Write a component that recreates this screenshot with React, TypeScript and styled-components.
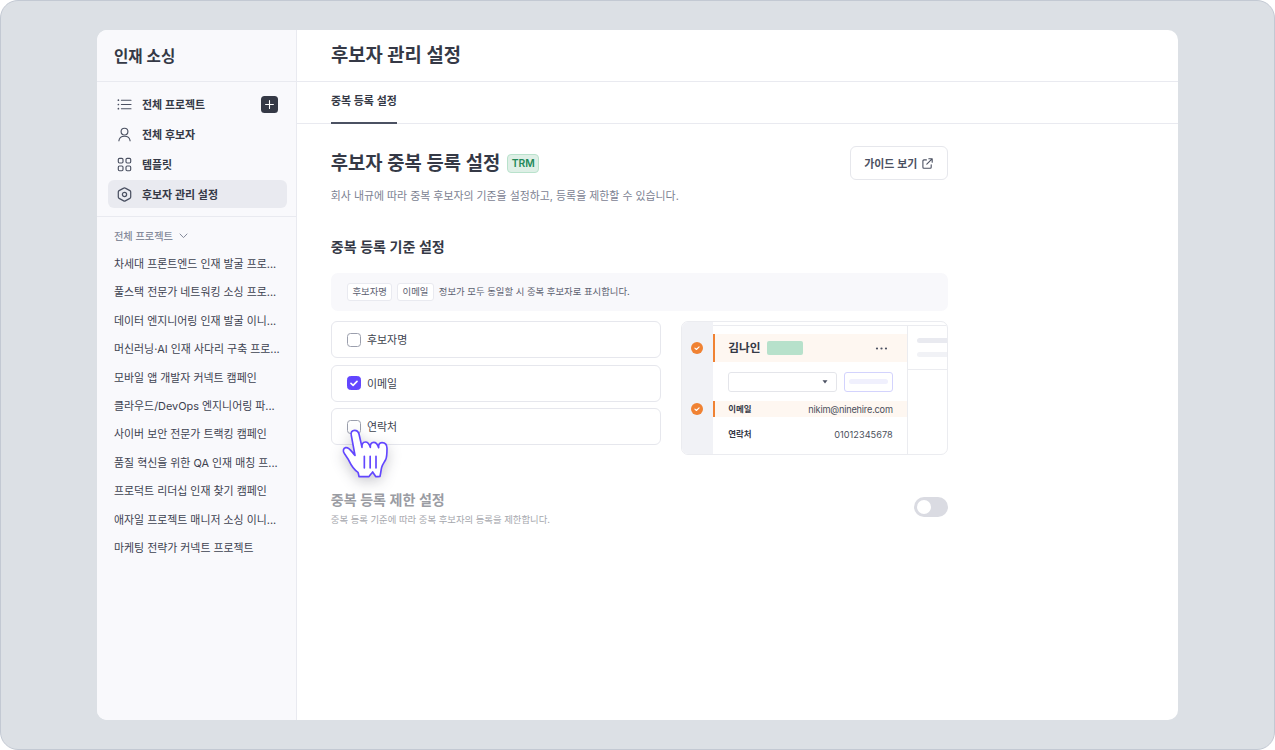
import { useState } from 'react'
import styled, { createGlobalStyle } from 'styled-components'

const GlobalStyle = createGlobalStyle`
    * { box-sizing: border-box; }
    body {
        margin: 0;
        background: #fff;
        color: #353946;
        font-family: Inter, "Noto Sans CJK KR", sans-serif;
        font-size: 10.95px;
        line-height: 16px;
    }
    p, h1, h2, h3, ul { margin: 0; padding: 0; }
    button { font-family: inherit; }
`
const Stage = styled.div`
    width: 1275px;
    height: 750px;
    padding: 29px 96px;
    border: 1px solid #c3c9d3;
    border-radius: 18px;
    background: #dce0e5;
`
const Window = styled.div`
    display: flex;
    width: 1081px;
    height: 690px;
    border-radius: 10px;
    overflow: hidden;
    background: #fff;
`
const Sidebar = styled.aside`
    width: 200.4px;
    flex: none;
    background: #f9f9fc;
    border-right: 1px solid #e9eaf0;
`
const SidebarTitle = styled.h2`
    height: 52px;
    padding: 0 17px;
    border-bottom: 1px solid #e9eaf0;
    font-size: 15.6px;
    line-height: 54px;
    font-weight: 600;
`
const Nav = styled.nav`
    display: flex;
    flex-direction: column;
    gap: 2px;
    height: 135px;
    padding: 8px 9px 0 10.5px;
    border-bottom: 1px solid #e9eaf0;
`
const NavItem = styled.div<{ $active?: boolean }>`
    display: flex;
    align-items: center;
    gap: 10px;
    height: 28px;
    padding: 0 9.5px;
    border-radius: 6px;
    font-weight: 600;
    line-height: 18px;
    background: ${({ $active }) => ($active ? '#e9eaf0' : 'transparent')};
    & > svg {
        flex: none;
        color: #4b5162;
    }
`
const NavLabel = styled.span`
    padding-top: 1px;
`
const AddButton = styled.button`
    display: flex;
    align-items: center;
    justify-content: center;
    width: 17px;
    height: 17px;
    margin-left: auto;
    padding: 0;
    border: none;
    border-radius: 3.5px;
    color: #fff;
    background: #353946;
`
const GroupLabel = styled.div`
    display: flex;
    align-items: center;
    gap: 6px;
    height: 16px;
    margin: 11px 0 0 17px;
    font-size: 10.2px;
    font-weight: 500;
    color: #858b9b;
`
const ProjectList = styled.ul`
    padding: 5.8px 0 0 17px;
    list-style: none;
    & > li {
        height: 28.45px;
        font-size: 10.92px;
        line-height: 28.6px;
        white-space: nowrap;
        color: #3d4250;
    }
`
const Main = styled.main`
    flex: 1;
    min-width: 0;
`
const PageHeader = styled.header`
    height: 52px;
    padding-left: 33.5px;
    border-bottom: 1px solid #e9eaf0;
`
const PageTitle = styled.h1`
    font-size: 18.75px;
    line-height: 52px;
    font-weight: 600;
`
const Tabs = styled.div`
    display: flex;
    height: 42px;
    padding-left: 33.5px;
    border-bottom: 1px solid #e9eaf0;
`
const Tab = styled.div`
    height: 42px;
    line-height: 39px;
    font-weight: 600;
    border-bottom: 2px solid #4b5162;
`
const Content = styled.div`
    width: 650.4px;
    padding: 22px 0 0 33.4px;
`
const TitleRow = styled.div`
    display: flex;
    align-items: center;
    height: 34px;
`
const Title = styled.h2`
    font-size: 18.75px;
    line-height: 34px;
    padding-top: 1px;
    font-weight: 600;
`
const Badge = styled.span`
    height: 19px;
    margin-left: 7px;
    padding: 0 3.5px;
    border: 1px solid #b9e2cc;
    border-radius: 4px;
    font-size: 10.3px;
    line-height: 17px;
    font-weight: 600;
    color: #23895a;
    background: #deefe6;
`
const GuideButton = styled.button`
    display: flex;
    align-items: center;
    justify-content: center;
    gap: 5px;
    width: 98px;
    height: 34px;
    margin-left: auto;
    padding: 0;
    border: 1px solid #e6e7ec;
    border-radius: 6px;
    font-size: 10.95px;
    font-weight: 600;
    color: #4b5162;
    background: #fff;
`
const Description = styled.p`
    margin-top: 8px;
    font-size: 10.92px;
    line-height: 17px;
    color: #7c8292;
`
const SectionTitle = styled.h3<{ $muted?: boolean }>`
    font-size: 14.05px;
    line-height: 20px;
    font-weight: 600;
    color: ${({ $muted }) => ($muted ? '#9a9ca3' : '#353946')};
`
const Criteria = styled.section`
    margin-top: 32px;
`
const Notice = styled.div`
    display: flex;
    align-items: center;
    height: 38px;
    margin-top: 16px;
    padding-left: 16.4px;
    border-radius: 7px;
    font-size: 9.4px;
    color: #5b6070;
    background: #f8f8fb;
`
const Tag = styled.span`
    height: 18px;
    margin-right: 5px;
    padding: 0 4.3px;
    border: 1px solid #e9eaf0;
    border-radius: 3px;
    line-height: 16px;
    background: #fff;
`
const Columns = styled.div`
    display: flex;
    justify-content: space-between;
    margin-top: 10px;
`
const OptionList = styled.div`
    display: flex;
    flex-direction: column;
    gap: 6.7px;
    width: 330px;
`
const Option = styled.div`
    position: relative;
    display: flex;
    align-items: center;
    gap: 6px;
    height: 37px;
    padding-left: 15.2px;
    border: 1px solid #e6e7ed;
    border-radius: 6px;
    color: #40444f;
`
const OptionLabel = styled.span`
    padding-top: 1px;
    line-height: 16px;
`
const Box = styled.span<{ $checked: boolean }>`
    display: flex;
    align-items: center;
    justify-content: center;
    width: 14px;
    height: 14px;
    border: 1px solid ${({ $checked }) => ($checked ? '#6246ff' : '#9b9fad')};
    border-radius: 3.5px;
    background: ${({ $checked }) => ($checked ? '#6246ff' : '#fff')};
`
const Pointer = styled.svg`
    position: absolute;
    left: -2px;
    top: 6px;
    width: 70px;
    height: 75px;
    overflow: visible;
    filter: drop-shadow(0 4px 7px rgba(30, 30, 50, 0.24));
`
const Preview = styled.div`
    display: flex;
    width: 267px;
    height: 134px;
    border: 1px solid #ebecf0;
    border-radius: 7px;
    overflow: hidden;
`
const Gutter = styled.div`
    display: flex;
    flex-direction: column;
    align-items: center;
    gap: 49px;
    width: 31px;
    padding: 20px 1px 0 0;
    background: #f1f2f6;
`
const Profile = styled.div`
    width: 195px;
    margin-top: 3px;
    border-top: 1px solid #ebecf0;
    border-right: 1px solid #ebecf0;
`
const ProfileHead = styled.div`
    display: flex;
    align-items: center;
    height: 28px;
    margin-top: 8px;
    padding: 0 19px 0 13.5px;
    border-left: 2px solid #f08233;
    font-size: 11.7px;
    font-weight: 600;
    background: #fef7f1;
    & > svg { margin-left: auto; }
`
const GreenChip = styled.span`
    width: 36px;
    height: 14px;
    margin-left: 6.8px;
    border-radius: 2px;
    background: #b7e1cb;
`
const Controls = styled.div`
    display: flex;
    gap: 7px;
    height: 20px;
    margin: 9.5px 0 0 15px;
`
const Select = styled.div`
    display: flex;
    align-items: center;
    justify-content: flex-end;
    width: 109px;
    padding-right: 8px;
    border: 1px solid #e4e5ea;
    border-radius: 3px;
`
const GhostButton = styled.div`
    display: flex;
    align-items: center;
    justify-content: center;
    width: 49px;
    border: 1px solid #d3d3fd;
    border-radius: 3px;
`
const Bar = styled.span<{ $width: number; $color: string }>`
    width: ${({ $width }) => $width}px;
    height: 5px;
    border-radius: 3px;
    background: ${({ $color }) => $color};
`
const Field = styled.div<{ $marked?: boolean }>`
    display: flex;
    align-items: center;
    justify-content: space-between;
    height: 15.5px;
    margin-top: 9.5px;
    padding: 0 14px 0 13.5px;
    border-left: 2px solid ${({ $marked }) => ($marked ? '#f08233' : 'transparent')};
    background: ${({ $marked }) => ($marked ? '#fef7f1' : 'transparent')};
    font-size: 8.45px;
    & > b { font-weight: 600; }
`
const FieldValue = styled.span<{ $spacing: number }>`
    padding-top: 2px;
    font-size: 9.2px;
    letter-spacing: ${({ $spacing }) => $spacing}px;
    color: #4b4f5b;
`
const SidePane = styled.div`
    display: flex;
    flex-direction: column;
    gap: 9px;
    flex: 1;
    height: 45px;
    margin-top: 3px;
    padding: 12px 0 0 9px;
    border-top: 1px solid #ebecf0;
    border-bottom: 1px solid #ebecf0;
    overflow: hidden;
`
const Restriction = styled.section`
    display: flex;
    align-items: center;
    justify-content: space-between;
    margin-top: 35px;
    & p {
        margin-top: 2px;
        font-size: 9.37px;
        color: #a5a7ad;
    }
`
const Switch = styled.button`
    width: 34px;
    height: 20px;
    margin-top: -4px;
    padding: 3px;
    border: none;
    border-radius: 10px;
    background: #dadbe2;
    &::before {
        content: '';
        display: block;
        width: 14px;
        height: 14px;
        border-radius: 50%;
        background: #fff;
    }
`

const icon = { width: 15, height: 15, viewBox: '0 0 15 15', fill: 'none', stroke: 'currentColor', strokeWidth: 1.15, strokeLinecap: 'round' as const, strokeLinejoin: 'round' as const }

const ListIcon = () => (
    <svg {...icon}>
        <path d="M4.4 3.2H14M4.4 7.5H14M4.4 11.7H14" />
        <path d="M1.4 3.2h.01M1.4 7.5h.01M1.4 11.7h.01" strokeWidth="1.7" />
    </svg>
)
const UserIcon = () => (
    <svg {...icon}>
        <circle cx="7.5" cy="4.6" r="3.4" />
        <path d="M1.9 13.8c.3-2.9 2.5-4.6 5.6-4.6s5.3 1.7 5.6 4.6" />
    </svg>
)
const GridIcon = () => (
    <svg {...icon}>
        <rect x="1.3" y="1.3" width="4.7" height="4.7" rx="1.2" />
        <rect x="9" y="1.3" width="4.7" height="4.7" rx="1.2" />
        <rect x="1.3" y="9" width="4.7" height="4.7" rx="1.2" />
        <rect x="9" y="9" width="4.7" height="4.7" rx="1.2" />
    </svg>
)
const HexIcon = () => (
    <svg {...icon} strokeWidth={1.25}>
        <path d="M6.7 1.1a1.6 1.6 0 0 1 1.6 0l4.6 2.5a1.5 1.5 0 0 1 .8 1.3v5.2a1.5 1.5 0 0 1-.8 1.3l-4.6 2.5a1.6 1.6 0 0 1-1.6 0l-4.6-2.5a1.5 1.5 0 0 1-.8-1.3V4.9a1.5 1.5 0 0 1 .8-1.3z" />
        <circle cx="7.5" cy="7.5" r="2.1" />
    </svg>
)
const MatchedIcon = () => (
    <svg width="12" height="12" viewBox="0 0 12 12" fill="none">
        <circle cx="6" cy="6" r="6" fill="#f08233" />
        <path d="m3.9 6.1 1.5 1.4 2.7-2.7" stroke="#fff" strokeWidth="1.1" strokeLinecap="round" strokeLinejoin="round" />
    </svg>
)

const projects = [
    '차세대 프론트엔드 인재 발굴 프로...',
    '풀스택 전문가 네트워킹 소싱 프로...',
    '데이터 엔지니어링 인재 발굴 이니...',
    '머신러닝·AI 인재 사다리 구축 프로...',
    '모바일 앱 개발자 커넥트 캠페인',
    '클라우드/DevOps 엔지니어링 파...',
    '사이버 보안 전문가 트랙킹 캠페인',
    '품질 혁신을 위한 QA 인재 매칭 프...',
    '프로덕트 리더십 인재 찾기 캠페인',
    '애자일 프로젝트 매니저 소싱 이니...',
    '마케팅 전략가 커넥트 프로젝트',
]
const options = ['후보자명', '이메일', '연락처']

const App = () => {
    const [checked, setChecked] = useState<string[]>(['이메일'])
    const toggle = (name: string) =>
        setChecked(checked.includes(name) ? checked.filter(c => c !== name) : [...checked, name])
    return (
        <Stage>
            <GlobalStyle />
            <Window>
                <Sidebar>
                    <SidebarTitle>인재 소싱</SidebarTitle>
                    <Nav>
                        <NavItem>
                            <ListIcon /><NavLabel>전체 프로젝트</NavLabel>
                            <AddButton aria-label="추가">
                                <svg width="9" height="9" viewBox="0 0 9 9" stroke="currentColor" strokeWidth="1.1" strokeLinecap="round"><path d="M4.5.6v7.8M.6 4.5h7.8" /></svg>
                            </AddButton>
                        </NavItem>
                        <NavItem><UserIcon /><NavLabel>전체 후보자</NavLabel></NavItem>
                        <NavItem><GridIcon /><NavLabel>템플릿</NavLabel></NavItem>
                        <NavItem $active><HexIcon /><NavLabel>후보자 관리 설정</NavLabel></NavItem>
                    </Nav>
                    <GroupLabel>
                        전체 프로젝트
                        <svg width="9" height="6" viewBox="0 0 9 6" fill="none" stroke="currentColor" strokeLinecap="round" strokeLinejoin="round"><path d="m1 1 3.5 3.6L8 1" /></svg>
                    </GroupLabel>
                    <ProjectList>
                        {projects.map(p => <li key={p}>{p}</li>)}
                    </ProjectList>
                </Sidebar>
                <Main>
                    <PageHeader><PageTitle>후보자 관리 설정</PageTitle></PageHeader>
                    <Tabs><Tab>중복 등록 설정</Tab></Tabs>
                    <Content>
                        <TitleRow>
                            <Title>후보자 중복 등록 설정</Title>
                            <Badge>TRM</Badge>
                            <GuideButton>
                                가이드 보기
                                <svg width="11" height="11" viewBox="0 0 11 11" fill="none" stroke="currentColor" strokeWidth="1.1" strokeLinecap="round" strokeLinejoin="round"><path d="M4.4 1.9H1.9a1 1 0 0 0-1 1v6.3a1 1 0 0 0 1 1h6.3a1 1 0 0 0 1-1V6.7M6.8.8h3.4v3.4M10.1.9 4.8 6.2" /></svg>
                            </GuideButton>
                        </TitleRow>
                        <Description>회사 내규에 따라 중복 후보자의 기준을 설정하고, 등록을 제한할 수 있습니다.</Description>
                        <Criteria>
                            <SectionTitle>중복 등록 기준 설정</SectionTitle>
                            <Notice>
                                <Tag>후보자명</Tag>
                                <Tag>이메일</Tag>
                                정보가 모두 동일할 시 중복 후보자로 표시합니다.
                            </Notice>
                            <Columns>
                                <OptionList>
                                    {options.map(name => (
                                        <Option key={name} onClick={() => toggle(name)}>
                                            <Box $checked={checked.includes(name)}>
                                                {checked.includes(name) && (
                                                    <svg width="8" height="7" viewBox="0 0 8 7" fill="none" stroke="#fff" strokeWidth="1.6" strokeLinecap="round" strokeLinejoin="round"><path d="m1 3.4 2.1 2L7 1.4" /></svg>
                                                )}
                                            </Box>
                                            <OptionLabel>{name}</OptionLabel>
                                            {name === '연락처' && (
                                                <Pointer viewBox="0 0 210 225" fill="#fff" stroke="#6246ff" strokeWidth="5" strokeLinejoin="round" strokeLinecap="round">
                                                    <path d="M64 62C61 52 66 46 74 46c7 0 11 4 13 11l9 40c-1-9 2-16 10-16 8 0 12 6 15 16-1-9 3-15 10-15s12 6 15 16c-1-9 2-15 10-15 11 0 15 7 15 17 0 16 0 27-4 34-4 8-10 14-12 23-2 8-2 14-5 27-5 1-8 1-13 1-3-5-6-9-9-14-4 5-8 9-11 14H87c-1-5-1-8-3-13-13-9-20-20-26-33-4-9-8-13-14-22-7-9-4-17 3-19 11-3 18 13 28 23z" />
                                                    <path d="M103 124v35M120.5 124v35M138 124v35" />
                                                </Pointer>
                                            )}
                                        </Option>
                                    ))}
                                </OptionList>
                                <Preview>
                                    <Gutter><MatchedIcon /><MatchedIcon /></Gutter>
                                    <Profile>
                                        <ProfileHead>
                                            김나인<GreenChip />
                                            <svg width="13" height="3" viewBox="0 0 13 3" fill="#4b5162"><circle cx="2" cy="1.5" r="1.1" /><circle cx="6.5" cy="1.5" r="1.1" /><circle cx="11" cy="1.5" r="1.1" /></svg>
                                        </ProfileHead>
                                        <Controls>
                                            <Select><svg width="6" height="4" viewBox="0 0 6 4" fill="#4b5162"><path d="M.5.3h5L3 3.6z" /></svg></Select>
                                            <GhostButton><Bar $width={39} $color="#f0f0fd" /></GhostButton>
                                        </Controls>
                                        <Field $marked><b>이메일</b><FieldValue $spacing={-0.2}>nikim@ninehire.com</FieldValue></Field>
                                        <Field><b>연락처</b><FieldValue $spacing={0.03}>01012345678</FieldValue></Field>
                                    </Profile>
                                    <SidePane>
                                        <Bar $width={40} $color="#e9eaf0" />
                                        <Bar $width={40} $color="#f1f2f6" />
                                    </SidePane>
                                </Preview>
                            </Columns>
                        </Criteria>
                        <Restriction>
                            <div>
                                <SectionTitle $muted>중복 등록 제한 설정</SectionTitle>
                                <p>중복 등록 기준에 따라 중복 후보자의 등록을 제한합니다.</p>
                            </div>
                            <Switch aria-label="중복 등록 제한" />
                        </Restriction>
                    </Content>
                </Main>
            </Window>
        </Stage>
    )
}

export default App
